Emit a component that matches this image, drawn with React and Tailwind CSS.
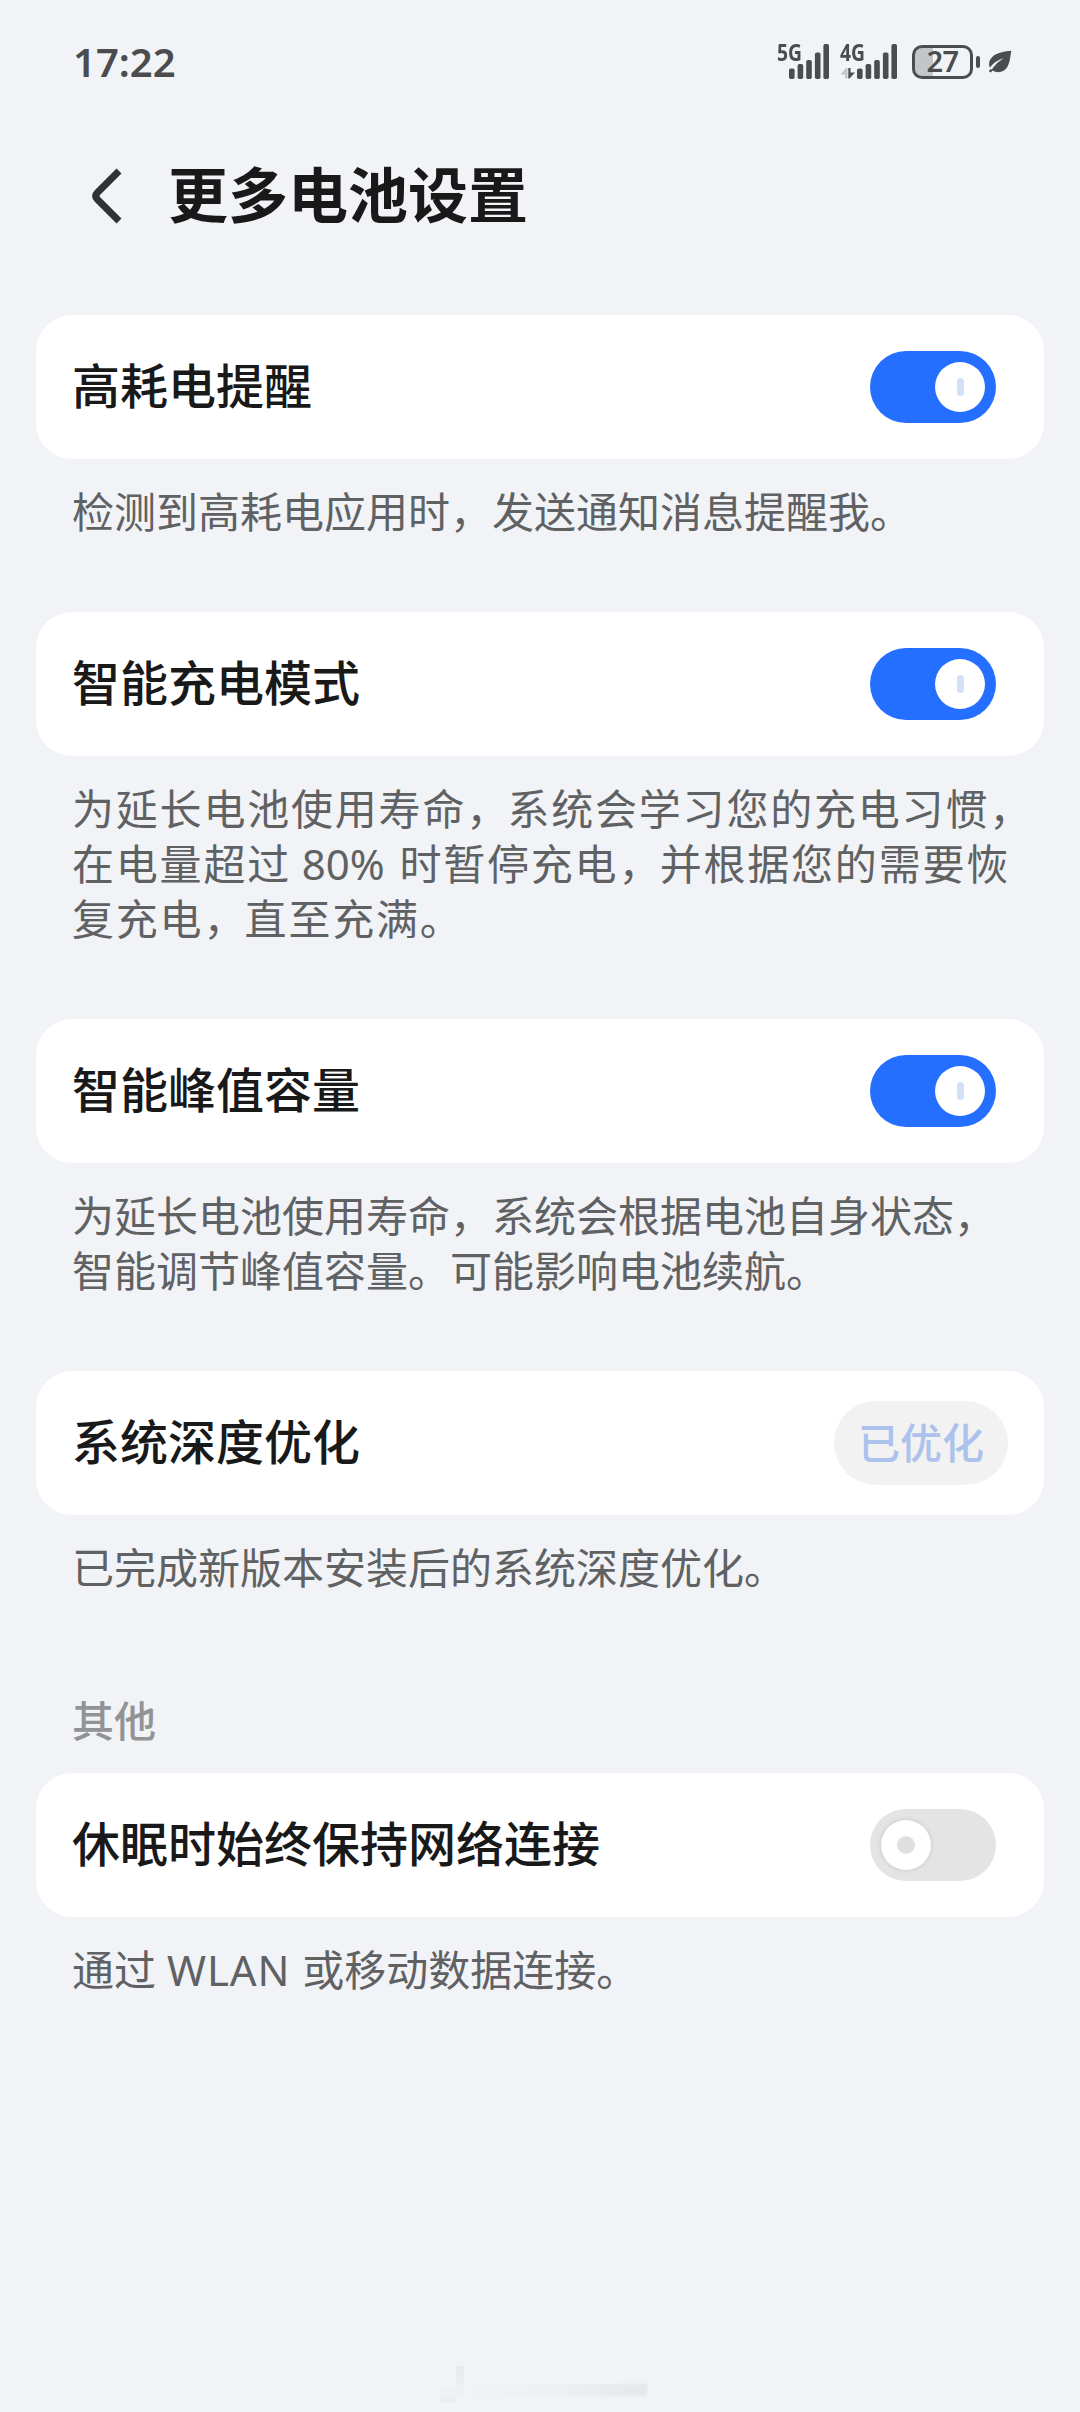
const SignalBars = () => (
  <svg width="41" height="36" viewBox="0 0 41 36" fill="#4b4c4e">
    <rect x="0" y="25.5" width="5.6" height="10.5" rx="1.8" />
    <rect x="8.6" y="21" width="5.6" height="15" rx="1.8" />
    <rect x="17.2" y="17" width="5.6" height="19" rx="1.8" />
    <rect x="25.9" y="9.5" width="5.6" height="26.5" rx="1.8" />
    <rect x="34.4" y="1" width="5.6" height="35" rx="1.8" />
  </svg>
);

const DataArrows = () => (
  <svg className="absolute bottom-[2px] left-0" width="16" height="11" viewBox="0 0 16 11">
    <path d="M7.5 0V10.5H5V6.5H0.5L6 0z" fill="#c4c5c7" />
    <path d="M8.3 0H10.5V4.5H15L9.5 10.5H8.3z" fill="#4b4c4e" />
  </svg>
);

const Signal = ({ label, data }) => (
  <div className={`relative flex h-[38px] items-start ${data ? 'w-[59px] pl-[17px]' : 'w-[55px] pl-[12px]'}`}>
    <span className="absolute -top-[2px] left-0 origin-left scale-x-[0.82] text-[23.5px] leading-[22px] font-bold">
      {label}
    </span>
    {data && <DataArrows />}
    <SignalBars />
  </div>
);

const StatusBar = () => (
  <div className="flex h-[124px] items-center justify-between pr-[68px] pl-[73px] text-[#4b4c4e]">
    <span className="pb-[1px] text-[40px] leading-none font-semibold">17:22</span>
    <div className="flex items-center">
      <Signal label="5G" />
      <div className="w-[8px]"></div>
      <Signal label="4G" data />
      <div className="ml-[13px] flex h-[34px] w-[61px] items-center justify-center rounded-[10px] border-3 border-[#4b4c4e] bg-linear-to-r from-[#c4c5c7] from-33% to-transparent to-33%">
        <span className="-mt-[3px] text-[29px] leading-none font-semibold tracking-[-0.5px]">27</span>
      </div>
      <div className="ml-[3px] h-[12px] w-[4px] rounded-[2px] bg-[#4b4c4e]"></div>
      <svg className="ml-[8px]" width="24" height="24" viewBox="0 0 24 24">
        <path d="M23.4.8C17 1.2 8.5 2.6 4 7.2C.5 10.8.4 15 2.4 18.6L1 21.5L3 22.6L4.5 20.5C10 23.8 16.5 22 19.6 16.5C22.4 11.5 22.2 5.5 23.4.8Z" fill="#4b4c4e" />
        <path d="M1 18.8C4.5 13.5 9 10.3 15.5 8.2C10.5 11.4 7 14.5 3.8 19.6" fill="#f1f3f7" />
      </svg>
    </div>
  </div>
);

const Toggle = ({ on }) => (
  <div className={`flex h-[72px] w-[126px] items-center rounded-full px-[11px] ${on ? 'justify-end bg-[#246fff]' : 'justify-start bg-[#e4e4e4]'}`}>
    <div className={`flex h-[50px] w-[50px] items-center justify-center rounded-full bg-white ${on ? '' : 'shadow-[0_0_4px_rgba(0,0,0,0.15)]'}`}>
      <div className={on ? 'h-[18px] w-[7px] rounded-full bg-[#d3e0fa]' : 'h-[18px] w-[18px] rounded-full bg-[#dfdfdf]'}></div>
    </div>
  </div>
);

const Card = ({ title, children }) => (
  <div className="flex h-[144px] items-center justify-between rounded-[36px] bg-white pr-[48px] pl-[36px]">
    <h2 className="pb-[2px] text-[48px] leading-[70px] font-medium text-[#19191a]">{title}</h2>
    {children}
  </div>
);

const Description = ({ children, spaced }) => (
  <p className={`px-[36px] pt-[25px] pb-[73px] text-[42px] leading-[55px] whitespace-nowrap text-[#606163] ${spaced ? 'tracking-[1.8px]' : ''}`}>
    {children}
  </p>
);

// full-width comma without the extra tracking of the spaced paragraph
const Comma = () => <span className="tracking-[-0.8px]">，</span>;

export default function App() {
  return (
    <div className="flex min-h-[2412px] w-[1080px] flex-col overflow-hidden bg-[#f1f3f7] font-['Noto_Sans','Noto_Sans_CJK_SC',sans-serif]">
      <StatusBar />

      <header className="flex h-[191px] items-start pt-[27px] pl-[88px]">
        <svg className="mt-[14px]" width="40" height="60" viewBox="0 0 40 60" fill="none" stroke="#303133" strokeWidth="7" strokeLinejoin="round">
          <path d="M31 6L9.5 27.5Q6 31 9.5 34.5L31 56" />
        </svg>
        <h1 className="ml-[40px] text-[60px] leading-[88px] font-bold text-[#19191a]">更多电池设置</h1>
      </header>

      <main className="px-[36px]">
        <Card title="高耗电提醒">
          <Toggle on />
        </Card>
        <Description>检测到高耗电应用时，发送通知消息提醒我。</Description>

        <Card title="智能充电模式">
          <Toggle on />
        </Card>
        <Description spaced>
          为延长电池使用寿命<Comma />系统会学习您的充电习惯<Comma />
          <br />
          在电量超过<span className="tracking-[-0.1px]"> 80%</span>
          <span className="tracking-[4px]"> </span>时暂停充电<Comma />并根据您的需要恢
          <br />
          复充电<Comma />直至充满。
        </Description>

        <Card title="智能峰值容量">
          <Toggle on />
        </Card>
        <Description>
          为延长电池使用寿命，系统会根据电池自身状态，
          <br />
          智能调节峰值容量。可能影响电池续航。
        </Description>

        <Card title="系统深度优化">
          <button className="-mr-[12px] h-[84px] w-[174px] rounded-full bg-[#f2f2f2] pb-[1px] text-[42px] leading-[60px] font-medium text-[#acc1ec]">
            已优化
          </button>
        </Card>
        <Description>已完成新版本安装后的系统深度优化。</Description>

        <h3 className="mt-[23px] mb-[22px] px-[36px] text-[42px] leading-[60px] font-medium text-[#929395]">其他</h3>
        <Card title="休眠时始终保持网络连接">
          <Toggle />
        </Card>
        <Description>
          通过 <span className="tracking-[0.9px]">WLAN </span>或移动数据连接。
        </Description>
      </main>

      <footer className="mt-auto flex h-[46px] items-start pl-[440px]">
        <div className="mt-[22px] h-[15px] w-[16px] bg-linear-to-b from-[#f0f2f5] to-[#ecedf0]"></div>
        <div className="h-[32px] w-[8px] bg-linear-to-b from-[#e8e9ec] to-[#f0f2f5]"></div>
        <div className="mt-[18px] h-[12px] w-[183px] bg-linear-to-r from-[#f1f3f6] via-[#eff0f3] to-[#e6e7ea] blur-[1px]"></div>
      </footer>
    </div>
  );
}
